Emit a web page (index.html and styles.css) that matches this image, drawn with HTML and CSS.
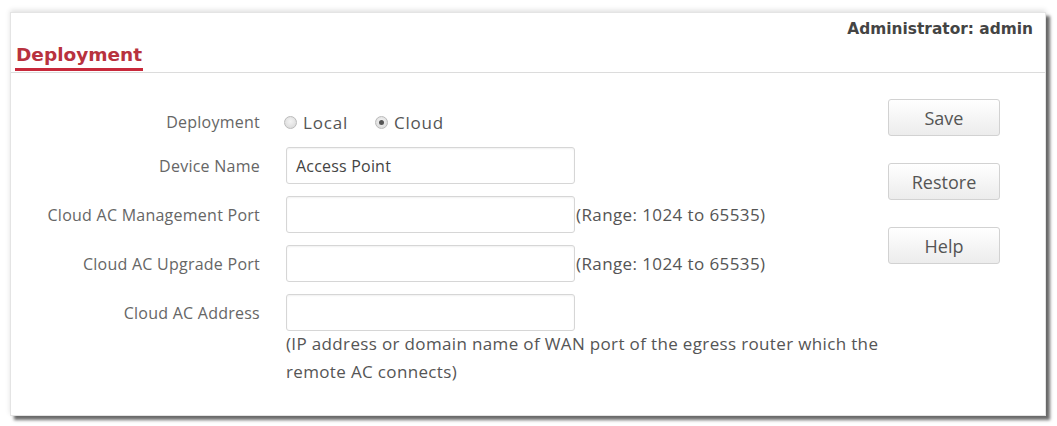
FILE: index.html
```html
<!DOCTYPE html>
<html>
<head>
<meta charset="utf-8">
<link rel="stylesheet" href="styles.css">
</head>
<body>
<div class="card">
  <div class="header">
    <div class="title">Deployment</div>
    <div class="admin">Administrator: admin</div>
  </div>
  <div class="content">
    <div class="form">
      <div class="row row-radio">
        <div class="label">Deployment</div>
        <div class="field">
          <span class="radio"></span><span class="opt">Local</span>
          <span class="radio checked"></span><span class="opt">Cloud</span>
        </div>
      </div>
      <div class="row">
        <div class="label">Device Name</div>
        <div class="field"><div class="input">Access Point</div></div>
      </div>
      <div class="row">
        <div class="label">Cloud AC Management Port</div>
        <div class="field"><div class="input"></div><span class="hint">(Range: 1024 to 65535)</span></div>
      </div>
      <div class="row">
        <div class="label">Cloud AC Upgrade Port</div>
        <div class="field"><div class="input"></div><span class="hint">(Range: 1024 to 65535)</span></div>
      </div>
      <div class="row">
        <div class="label">Cloud AC Address</div>
        <div class="field"><div class="input"></div></div>
      </div>
      <div class="help-row">
        <div class="label"></div>
        <div class="help">(IP address or domain name of WAN port of the egress router which the remote AC connects)</div>
      </div>
    </div>
    <div class="buttons">
      <div class="btn">Save</div>
      <div class="btn">Restore</div>
      <div class="btn">Help</div>
    </div>
  </div>
</div>
</body>
</html>
```
FILE: styles.css
```css
html, body {
  margin: 0;
  padding: 0;
  background: #fff;
}
body {
  padding: 12px 11px 10px 10px;
  font-family: "Open Sans", "Noto Sans", sans-serif;
  color: #555;
}
.card {
  height: 404px;
  box-sizing: border-box;
  background: #fff;
  border: 1px solid #e4e4e4;
  box-shadow: 0 -2px 5px rgba(0,0,0,0.12), 4px 4px 3px rgba(60,60,60,0.75);
}
.header {
  height: 59px;
  display: flex;
  justify-content: space-between;
  border-bottom: 1px solid #dcdcdc;
  padding: 0 12px 0 4px;
}
.title {
  align-self: flex-end;
  font-family: "DejaVu Sans", sans-serif;
  font-weight: bold;
  font-size: 18.5px;
  color: #b8323e;
  padding: 0 1px 2px 1px;
  border-bottom: 3px solid #c8283a;
  margin-bottom: 1px;
  line-height: 22px;
}
.admin {
  padding-top: 7px;
  font-family: "DejaVu Sans", sans-serif;
  font-weight: bold;
  font-size: 15.4px;
  color: #444;
}
.content {
  display: flex;
  justify-content: space-between;
  padding: 26px 45px 0 0;
}
.form {
  flex: 1;
  min-width: 0;
  padding-top: 10px;
  display: flex;
  flex-direction: column;
  gap: 12px;
}
.row {
  display: flex;
  align-items: center;
  height: 37px;
}
.row-radio {
  height: 26px;
}
.label {
  flex: none;
  width: 275px;
  text-align: right;
  font-size: 16px;
  letter-spacing: 0.25px;
  color: #666;
  padding-right: 26px;
  box-sizing: border-box;
}
.field {
  display: flex;
  align-items: center;
  font-size: 16px;
}
.input {
  width: 289px;
  height: 37px;
  box-sizing: border-box;
  border: 1px solid #d6d6d6;
  border-radius: 3px;
  padding: 0 9px;
  display: flex;
  align-items: center;
  color: #444;
  font-size: 16px;
  letter-spacing: 0.2px;
  box-shadow: inset 0 1px 2px rgba(0,0,0,0.06);
}
.hint {
  margin-left: 1px;
  color: #555;
  font-size: 17px;
  letter-spacing: 0.4px;
  white-space: nowrap;
}
.radio {
  flex: none;
  width: 11px;
  height: 11px;
  border-radius: 50%;
  border: 1px solid #bbb;
  background: radial-gradient(circle at 50% 40%, #f4f4f4, #d6d6d6);
  margin: 0 6px 0 -2px;
  position: relative;
}
.radio.checked::after {
  content: "";
  position: absolute;
  left: 3px;
  top: 3px;
  width: 5px;
  height: 5px;
  border-radius: 50%;
  background: #555;
}
.opt {
  margin-right: 29px;
  color: #555;
  font-size: 17px;
  letter-spacing: 0.8px;
}
.help-row {
  display: flex;
  margin-top: -13px;
}
.help {
  width: 620px;
  flex: none;
  font-size: 17px;
  letter-spacing: 0.35px;
  line-height: 28px;
  color: #555;
}
.buttons {
  flex: none;
  display: flex;
  flex-direction: column;
  gap: 27px;
}
.btn {
  width: 112px;
  height: 37px;
  box-sizing: border-box;
  border: 1px solid #d2d2d2;
  border-radius: 3px;
  background: linear-gradient(#ffffff, #ececec);
  display: flex;
  align-items: center;
  justify-content: center;
  font-size: 18px;
  color: #555;
}
```
